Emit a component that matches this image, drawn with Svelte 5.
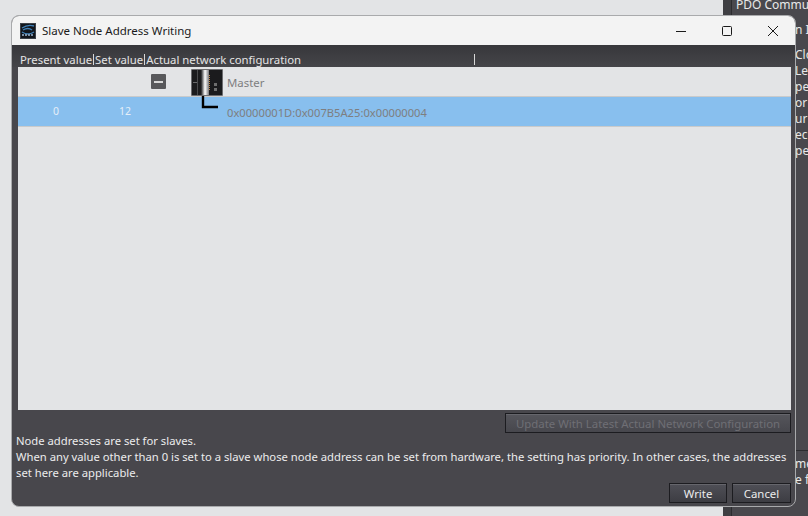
<script>
  const columns = ['Present value', 'Set value', 'Actual network configuration']
</script>

<div class="desktop">
  <aside class="behind">
    <div class="gutter"></div>
    <div class="side">
      <div class="side-title">PDO Commun</div>
      <div class="side-top">
        <div class="line">n I</div>
        <div class="line lines-start">Clo</div>
        <div class="line">Le</div>
        <div class="line">per</div>
        <div class="line">or</div>
        <div class="line">ur</div>
        <div class="line">ec</div>
        <div class="line">pe</div>
      </div>
      <div class="side-bottom">
        <div class="line">me</div>
        <div class="line">e f</div>
      </div>
    </div>
  </aside>

  <section class="window">
    <header class="titlebar">
      <svg class="app-icon" width="16" height="16" viewBox="0 0 16 16">
        <rect width="16" height="16" fill="#3c4148" />
        <rect x="1" y="1" width="14" height="14" fill="#12161c" />
        <path d="M2 5 Q8 1 14 3 M3 7 Q8 4 12 7 M2 9 Q8 13 14 9" stroke="#3f7fb5" stroke-width="1.4" fill="none" />
        <path d="M2 12H14" stroke="#9db7cf" stroke-width="1.6" stroke-dasharray="2 1" />
      </svg>
      <span class="title">Slave Node Address Writing</span>
      <div class="controls">
        <svg width="46" height="29" viewBox="0 0 46 29"><path d="M18 15.5H28" stroke="#1a1a1a" /></svg>
        <svg width="46" height="29" viewBox="0 0 46 29"><rect x="18.5" y="10.5" width="9" height="9" rx="1" fill="none" stroke="#1a1a1a" /></svg>
        <svg width="46" height="29" viewBox="0 0 46 29"><path d="M18 10L28 20M28 10L18 20" stroke="#1a1a1a" /></svg>
      </div>
    </header>

    <div class="body">
      <div class="heads">
        {#each columns as col}
          <span class="head">{col}</span>
        {/each}
      </div>

      <div class="table">
        <div class="row master">
          <span class="cell-present"></span>
          <span class="cell-set"></span>
          <span class="toggle"><i></i></span>
          <svg class="plc" width="32" height="27" viewBox="0 0 32 27">
            <defs>
              <linearGradient id="shine" x1="0" x2="1" y1="0" y2="0">
                <stop offset="0" stop-color="#1b1b1d" />
                <stop offset="0.5" stop-color="#ffffff" />
                <stop offset="1" stop-color="#77777a" />
              </linearGradient>
            </defs>
            <rect x="0" y="0" width="32" height="27" rx="1" fill="#6c6c6f" />
            <rect x="1" y="1" width="30" height="25" fill="#1b1b1d" />
            <rect x="10" y="1" width="8" height="25" fill="url(#shine)" />
            <rect x="6" y="1" width="1" height="25" fill="#4a4a4c" />
            <rect x="2" y="13" width="4" height="1" fill="#6a6a6c" />
            <path d="M18.5 6V22" stroke="#b9854a" stroke-dasharray="1 1" />
            <rect x="23" y="14" width="3" height="3" fill="#6e6e6e" />
            <rect x="23" y="19" width="3" height="3" fill="#6e6e6e" />
          </svg>
          <span class="name master-name">Master</span>
        </div>
        <div class="row selected">
          <span class="cell-present">0</span>
          <span class="cell-set">12</span>
          <svg class="link" width="18" height="13" viewBox="0 0 18 13"><path d="M2 0V11H17" stroke="#000" stroke-width="2.4" fill="none" /></svg>
          <span class="name hex">0x0000001D:0x007B5A25:0x00000004</span>
        </div>
      </div>

      <div class="update-row">
        <button class="btn update" disabled>Update With Latest Actual Network Configuration</button>
      </div>

      <p class="note">Node addresses are set for slaves.<br />When any value other than 0 is set to a slave whose node address can be set from hardware, the setting has priority. In other cases, the addresses set here are applicable.</p>

      <div class="actions">
        <button class="btn write">Write</button>
        <button class="btn cancel">Cancel</button>
      </div>
    </div>
  </section>
</div>

<style>
  :global(body) {
    margin: 0;
    background: #e3e4e6;
  }

  .desktop {
    position: relative;
    width: 808px;
    height: 516px;
    overflow: hidden;
    font-family: "Noto Sans", "Open Sans", sans-serif;
    font-size: 11.4px;
  }

  .behind {
    position: absolute;
    top: 0;
    right: 0;
    bottom: 0;
    width: 85px;
    display: flex;
    background: #3b3b3f;
  }

  .gutter {
    width: 8px;
    background: #3f3f43;
    border-right: 1px solid #2c2c2f;
  }

  .side {
    flex: 1;
    display: flex;
    flex-direction: column;
    background: #49484d;
    color: #e8e8e8;
    font-size: 12px;
    line-height: 16px;
    white-space: nowrap;
    overflow: hidden;
  }

  .side-title {
    padding-left: 4px;
    height: 12px;
    line-height: 10px;
  }

  .side-top {
    padding: 10px 0 0 63px;
  }

  .lines-start {
    margin-top: 9px;
  }

  .side-bottom {
    margin-top: auto;
    box-sizing: border-box;
    height: 66px;
    padding: 5px 0 0 63px;
    border-top: 1px solid #2c2c2f;
  }

  .window {
    position: absolute;
    left: 11px;
    top: 15px;
    width: 785px;
    height: 492px;
    box-sizing: border-box;
    border: 1px solid #a9aaac;
    border-radius: 8px;
    overflow: hidden;
    display: flex;
    flex-direction: column;
    background: #48474c;
  }

  .titlebar {
    flex: none;
    height: 29px;
    display: flex;
    align-items: center;
    background: #f3f3f3;
    color: #1a1a1a;
    font-size: 11.5px;
  }

  .app-icon {
    margin-left: 8px;
  }

  .title {
    margin-left: 6px;
  }

  .controls {
    margin-left: auto;
    display: flex;
    margin-right: -1px;
  }

  .body {
    flex: 1;
    display: flex;
    flex-direction: column;
    color: #ececec;
    min-height: 0;
  }

  .heads {
    flex: none;
    height: 22px;
    box-sizing: border-box;
    padding: 6px 0 0 8px;
    display: flex;
    align-items: center;
    background: linear-gradient(#37373b, #454549);
    color: #e4e4e4;
    font-size: 11.35px;
  }

  .head {
    white-space: nowrap;
    padding-right: 1px;
    border-right: 1px solid #d8d8d8;
    height: 11px;
    line-height: 11px;
    margin-right: 1px;
  }

  .head:nth-child(3) {
    width: 327px;
  }

  .table {
    flex: none;
    height: 343px;
    margin: 0 4px 0 6px;
    background: #e3e4e6;
  }

  .row {
    position: relative;
    display: flex;
    align-items: center;
    box-sizing: border-box;
    border-bottom: 1px solid #c9cacb;
  }

  .master {
    height: 30px;
  }

  .selected {
    height: 30px;
    background: #88bfee;
  }

  .cell-present {
    width: 76px;
    text-align: center;
    color: #e4eef8;
    font-size: 10.5px;
    margin-top: -1px;
  }

  .cell-set {
    width: 62px;
    text-align: center;
    color: #e4eef8;
    font-size: 10.5px;
    margin-top: -1px;
  }

  .toggle {
    width: 15px;
    height: 15px;
    margin-left: -5px;
    margin-right: 25px;
    background: #58585b;
    display: flex;
    align-items: center;
    justify-content: center;
    border-radius: 1px;
  }

  .toggle i {
    width: 9px;
    height: 2px;
    background: #d8d8d8;
  }

  .plc {
    flex: none;
    margin-top: 1px;
  }

  .name {
    position: absolute;
    left: 209px;
    color: #7e7e80;
  }

  .master-name {
    top: 8px;
  }

  .hex {
    font-size: 11.2px;
    top: 8px;
  }

  .link {
    position: absolute;
    left: 183px;
    top: -1px;
  }

  .update-row {
    flex: none;
    display: flex;
    justify-content: flex-end;
    margin: 3px 4px 0 0;
  }

  .btn {
    box-sizing: border-box;
    height: 20px;
    padding: 0;
    font: inherit;
    color: #ececec;
    background: linear-gradient(#4f4f56, #3d3d43);
    border: 1px solid #1c1c20;
    box-shadow: inset 0 1px 0 #66666c;
  }

  .update {
    width: 286px;
    color: #6f6f75;
    background: linear-gradient(#55555b, #47474d);
  }

  .note {
    flex: none;
    margin: 0;
    padding: 0 0 0 4px;
    font-size: 11.25px;
    line-height: 16px;
  }

  .actions {
    margin-top: auto;
    margin-bottom: 3px;
    margin-right: 4px;
    display: flex;
    justify-content: flex-end;
    gap: 5px;
  }

  .write {
    width: 58px;
  }

  .cancel {
    width: 59px;
  }
</style>
